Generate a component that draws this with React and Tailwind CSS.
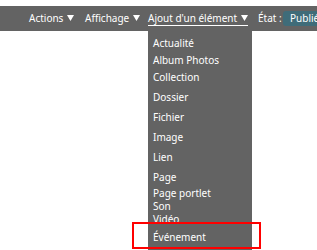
import React from 'react'

const items = [
  { label: 'Actualité', gap: 'mt-0' },
  { label: 'Album Photos', gap: 'mt-[4px]' },
  { label: 'Collection', gap: 'mt-[4px]' },
  { label: 'Dossier', gap: 'mt-[7px]' },
  { label: 'Fichier', gap: 'mt-[7px]' },
  { label: 'Image', gap: 'mt-[7px]' },
  { label: 'Lien', gap: 'mt-[7px]' },
  { label: 'Page', gap: 'mt-[7px]' },
  { label: 'Page portlet', gap: 'mt-[3px]' },
  { label: 'Son', gap: 'mt-0' },
  { label: 'Vidéo', gap: 'mt-0' },
  { label: 'Événement', gap: 'mt-[5px]' },
]

const Caret = () => (
  <svg width="7" height="6" viewBox="0 0 7 6" className="inline-block ml-[4px] mb-[1px] align-baseline">
    <path d="M0 0H7L3.5 6Z" fill="currentColor" />
  </svg>
)

export default function App() {
  return (
    <div className="relative w-[317px] h-[250px] overflow-hidden bg-white font-['Noto_Sans',sans-serif] text-[10px]">
      {/* Toolbar */}
      <div className="mt-[6px] h-[25px] bg-[#636363] flex items-center pl-[29px] whitespace-nowrap text-white">
        <span className="w-[56px] shrink-0">Actions<Caret /></span>
        <span className="w-[63px] shrink-0">Affichage<Caret /></span>
        <div className="relative w-[110px] shrink-0">
          <span className="inline-block border-b border-white leading-[14px]">Ajout d'un élément<Caret /></span>
          {/* Dropdown */}
          <div className="absolute left-0 top-[19px] w-[104px] h-[230px] bg-[#636363] pl-[5px] pt-[7px]">
            {items.map(({ label, gap }) => (
              <div key={label} className={`leading-[13px] ${gap}`}>{label}</div>
            ))}
          </div>
        </div>
        <span className="w-[25px] shrink-0">État :</span>
        <span className="shrink-0 rounded-[3px] bg-[#3f6c79] px-[7px] leading-[15px]">Publié</span>
      </div>

      {/* Annotation */}
      <div className="absolute left-[132px] top-[222px] w-[129px] h-[27px] border-2 border-[#ff0000]" />
    </div>
  )
}
